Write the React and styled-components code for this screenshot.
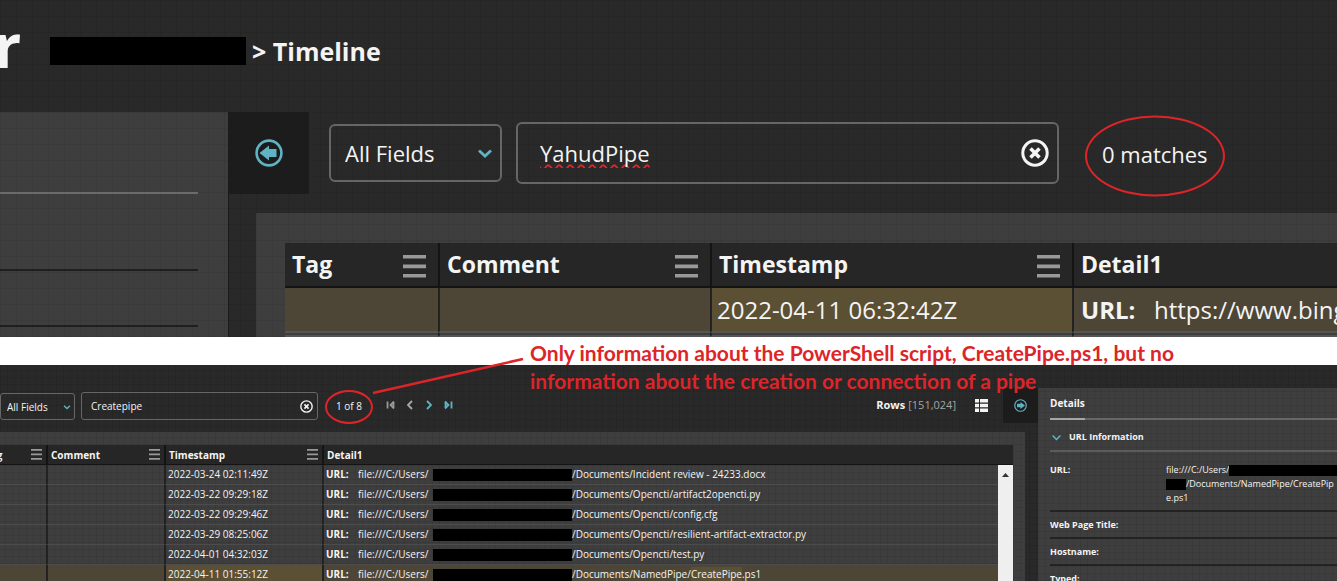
import React from "react";
import styled, { createGlobalStyle, css } from "styled-components";

const GlobalStyle = createGlobalStyle`
  *, *::before, *::after { box-sizing: border-box; }
  html, body { margin: 0; padding: 0; background: #ffffff; }
  body { font-family: "Open Sans", "Noto Sans", sans-serif; color: #f4f4f4; }
  button, input, select { font: inherit; color: inherit; }
`;

const accent = "#5fb3c3";
const red = "#dd2429";

const mesh = (pitch) => css`
  background-image:
    repeating-linear-gradient(90deg, rgba(0, 0, 0, 0.07) 0 1px, transparent 1px ${pitch}px),
    repeating-linear-gradient(0deg, rgba(0, 0, 0, 0.07) 0 1px, transparent 1px ${pitch}px);
`;

const Page = styled.main`
  display: flex;
  flex-direction: column;
  height: 100vh;
  overflow: hidden;
`;

const Capture = styled.section`
  position: relative;
  display: flex;
  flex-direction: column;
  background-color: #292929;
  ${(p) => mesh(p.$pitch)}
  ${(p) => p.$grow && "flex: 1; min-height: 0;"}
`;

const Gap = styled.div`
  position: relative;
  z-index: 2;
  flex: none;
  height: 28px;
`;

const Header = styled.header`
  display: flex;
  align-items: center;
  height: 112px;
  padding-bottom: 10px;
  overflow: hidden;
`;

const Brand = styled.span`
  margin-left: -6px;
  width: 56px;
  font-size: 60px;
  line-height: 64px;
  padding-bottom: 12px;
  font-weight: 700;
`;

const Redacted = styled.span`
  display: inline-block;
  flex: none;
  background: #000;
  width: ${(p) => p.$w}px;
  height: ${(p) => p.$h}px;
  vertical-align: middle;
`;

const Crumb = styled.h1`
  margin: 0 0 0 6px;
  font-size: 25px;
  line-height: 32px;
  font-weight: 700;
`;

const CutHeader = styled.header`
  height: 23px;
  overflow: hidden;
`;

const CutCrumb = styled.h2`
  margin: -12px 0 0 -25px;
  font-size: 11px;
  line-height: 16px;
  font-weight: 700;
`;

const Body = styled.div`
  display: flex;
  flex: 1;
  min-height: 0;
`;

const Sidebar = styled.aside`
  flex: none;
  width: 229px;
  padding-right: 30px;
  background-color: #3e3e3e;
  border-right: 1px solid #1a1a1a;
  ${mesh(16)}
`;

const Rule = styled.div`
  height: ${(p) => p.$h}px;
  border-bottom: 2px solid ${(p) => (p.$light ? "#6b6b6b" : "#1f1f1f")};
`;

const Content = styled.div`
  flex: 1;
  min-width: 0;
  display: flex;
  flex-direction: column;
`;

const Toolbar = styled.div`
  display: flex;
  align-items: flex-start;
  flex: none;
  height: ${(p) => (p.$small ? 44 : 101)}px;
  font-size: ${(p) => (p.$small ? 10 : 22)}px;
`;

const Collapse = styled.button`
  display: grid;
  place-items: center;
  flex: none;
  width: ${(p) => (p.$small ? 35 : 80)}px;
  height: ${(p) => (p.$small ? 35 : 82)}px;
  padding: 0;
  border: 0;
  background: #1c1c1c;
  color: ${accent};
`;

const Field = styled.div`
  display: flex;
  align-items: center;
  position: relative;
  flex: 0 1 ${(p) => p.$w}px;
  height: ${(p) => p.$h}px;
  margin: ${(p) => p.$m};
  border: ${(p) => (p.$small ? 1 : 2)}px solid #666;
  border-radius: ${(p) => (p.$small ? 3 : 6)}px;
`;

const Select = styled.select`
  appearance: none;
  width: 100%;
  height: 100%;
  padding: 0 0 0 ${(p) => (p.$small ? 6 : 14)}px;
  border: 0;
  outline: 0;
  background: transparent;
`;

const Chevron = styled.svg`
  position: absolute;
  right: ${(p) => p.$right}px;
  pointer-events: none;
  color: ${accent};
`;

const Input = styled.input`
  flex: 1;
  min-width: 0;
  height: 100%;
  padding: 0 0 0 ${(p) => (p.$small ? 9 : 22)}px;
  border: 0;
  outline: 0;
  background: transparent;
  ${(p) =>
    p.$misspelt &&
    `text-decoration: underline wavy ${red} 2px; text-decoration-skip-ink: none; text-underline-offset: 2px;`}
`;

const IconButton = styled.button`
  display: grid;
  place-items: center;
  flex: none;
  padding: 0;
  border: 0;
  background: transparent;
  color: ${(p) => p.$c || "#f4f4f4"};
  margin-right: ${(p) => p.$mr || 0}px;
`;

const Count = styled.span`
  position: relative;
  flex: none;
  white-space: nowrap;
  margin-left: ${(p) => (p.$small ? 18 : 43)}px;
  line-height: ${(p) => (p.$small ? 36 : 84)}px;
`;

const Ring = styled.span`
  position: absolute;
  left: 50%;
  top: 52%;
  width: ${(p) => p.$w}px;
  height: ${(p) => p.$h}px;
  transform: translate(-50%, -50%);
  border: 2px solid ${red};
  border-radius: 50%;
`;

const Pager = styled.nav`
  display: flex;
  align-items: center;
  gap: 7px;
  height: 34px;
  margin-left: 23px;
`;

const RowCount = styled.div`
  display: flex;
  gap: 3px;
  margin-left: auto;
  line-height: 34px;
  font-size: 11px;
  color: #a5a5a5;
  b { color: #f4f4f4; }
`;

const ViewButton = styled(IconButton)`
  height: 34px;
  margin: 0 15px 0 19px;
`;

const Panel = styled.div`
  flex: 1;
  background-color: #3e3e3e;
  ${(p) => mesh(p.$small ? 7 : 16)}
  margin: ${(p) => (p.$small ? "0 13px 0 -30px" : "0 0 0 27px")};
  padding: ${(p) => (p.$small ? "13px 12px 0 12px" : "30px 0 0 29px")};
`;

const Table = styled.table`
  width: 100%;
  table-layout: fixed;
  border-collapse: separate;
  border-spacing: 0;
  white-space: nowrap;
`;

const Col = styled.col`
  width: ${(p) => (p.$w ? `${p.$w}px` : "auto")};
`;

const Th = styled.th`
  height: ${(p) => (p.$small ? 20 : 45)}px;
  padding: 0 ${(p) => (p.$small ? "4px 0 3px" : "12px 0 7px")};
  background: #262626;
  border-bottom: ${(p) => (p.$small ? 1 : 2)}px solid #141414;
  font-size: ${(p) => (p.$small ? 10 : 23)}px;
  line-height: ${(p) => (p.$small ? 18 : 43)}px;
  font-weight: 700;
  text-align: left;
  & + & { border-left: 2px solid #141414; }
`;

const Heading = styled.div`
  display: flex;
  align-items: center;
  justify-content: space-between;
  svg { margin-top: ${(p) => (p.$small ? 0 : 3)}px; }
`;

const Td = styled.td`
  height: ${(p) => p.$h}px;
  padding: 0 0 0 ${(p) => (p.$small ? 2 : 5)}px;
  overflow: hidden;
  font-size: ${(p) => (p.$small ? 10 : 24)}px;
  line-height: ${(p) => (p.$small ? 19 : 42)}px;
  border-bottom: ${(p) => (p.$small ? 1 : 2)}px solid ${(p) => (p.$small ? "#4c4c4c" : "#555")};
  background: ${(p) => (p.$mark ? "#5b5033" : p.$hit ? "#4d4636" : "transparent")};
  & + & { border-left: 2px solid ${(p) => (p.$small ? "#222" : "#141414")}; }
`;

const UrlLine = styled.div`
  display: flex;
  align-items: center;
  padding-left: ${(p) => (p.$small ? 0 : 2)}px;
`;

const UrlLabel = styled.b`
  flex: none;
  width: ${(p) => (p.$small ? 32 : 73)}px;
`;

const UrlRoot = styled.span`
  flex: none;
  width: 75px;
`;

const Mark = styled.mark`
  color: inherit;
  background: #5b5033;
`;

const ScrollCell = styled.td`
  padding: 6px 0 0;
  vertical-align: top;
  background: #efefef;
  text-align: center;
  line-height: 0;
`;

const Details = styled.aside`
  flex: none;
  width: 299px;
  padding-left: 12px;
  overflow: hidden;
  background-color: #3e3e3e;
  ${mesh(7)}
  font-size: 9px;
  line-height: 14px;
`;

const Tabs = styled.div`
  display: flex;
  border-bottom: 2px solid #666;
`;

const Tab = styled.button`
  height: 32px;
  margin-bottom: -2px;
  padding: 0;
  border: 0;
  border-bottom: 2px solid #a5a5a5;
  background: transparent;
  font-size: 10px;
  font-weight: 700;
`;

const Group = styled.button`
  display: flex;
  align-items: center;
  gap: 8px;
  width: 100%;
  height: 32px;
  padding: 4px 0 0 2px;
  border: 0;
  border-bottom: 2px solid #5c5c5c;
  background: transparent;
  font-weight: 700;
`;

const Facts = styled.dl`
  margin: 0;
`;

const Fact = styled.div`
  display: flex;
  padding: ${(p) => (p.$tall ? "11px 0 5px" : "6px 0 5px")};
  border-bottom: 2px solid #232323;
  white-space: nowrap;
  dt { flex: none; width: 116px; font-weight: 700; }
  dd { margin: 0; }
`;

const Note = styled.p`
  position: absolute;
  left: 530px;
  top: 2px;
  margin: 0;
  white-space: nowrap;
  font: 700 21px/28px Lato, "Open Sans", sans-serif;
  color: ${red};
`;

const Leader = styled.svg`
  position: absolute;
  left: 371px;
  top: 18px;
`;

const CircleArrow = ({ size, flip }) => (
  <svg width={size} height={size} viewBox="0 0 28 28" transform={flip ? "scale(-1 1)" : undefined}>
    <circle cx="14" cy="14" r="12.4" fill="none" stroke="currentColor" strokeWidth="2.6" />
    <path d="M4.500 14 14 6.500V10H21.500v8H14v3.500Z" fill="currentColor" />
  </svg>
);

const ClearIcon = ({ size }) => (
  <svg width={size} height={size} viewBox="0 0 28 28" fill="none" stroke="currentColor">
    <circle cx="14" cy="14" r="12.2" strokeWidth="3" />
    <path d="m9.500 9.500 9 9m0-9-9 9" strokeWidth="3.600" />
  </svg>
);

const Down = ({ size, right }) => (
  <Chevron $right={right} width={size} height={size} viewBox="0 0 16 16" fill="none" stroke="currentColor" strokeWidth="2.800">
    <path d="m2 5.500 6 5.500 6-5.500" />
  </Chevron>
);

const Bars = ({ small }) => (
  <svg width={small ? 11 : 23} height={small ? 11 : 23} viewBox="0 0 23 23" fill="#999">
    <path d="M0 0h23v3.600H0zM0 9.600h23v3.600H0zM0 19h23v3.600H0z" />
  </svg>
);

const PageIcon = ({ d }) => (
  <svg width="12" height="12" viewBox="0 0 12 12" fill="none" stroke="currentColor" strokeWidth="1.800">
    <path d={d} />
  </svg>
);

const columns = ["Tag", "Comment", "Timestamp", "Detail1"];

const rows = [
  ["2022-03-24 02:11:49Z", "/Documents/Incident review - 24233.docx"],
  ["2022-03-22 09:29:18Z", "/Documents/Opencti/artifact2opencti.py"],
  ["2022-03-22 09:29:46Z", "/Documents/Opencti/config.cfg"],
  ["2022-03-29 08:25:06Z", "/Documents/Opencti/resilient-artifact-extractor.py"],
  ["2022-04-01 04:32:03Z", "/Documents/Opencti/test.py"],
  ["2022-04-11 01:55:12Z", "/Documents/NamedPipe/", "CreatePipe", ".ps1"],
];

const HeadRow = ({ small }) => (
  <thead>
    <tr>
      {columns.map((name, i) => (
        <Th key={name} $small={small} colSpan={small && i === 3 ? 2 : 1}>
          <Heading $small={small}>
            {name}
            {i < 3 && <Bars small={small} />}
          </Heading>
        </Th>
      ))}
    </tr>
  </thead>
);

const TopCapture = () => (
  <Capture $pitch={16}>
    <Header>
      <Brand>r</Brand>
      <Redacted $w={196} $h={28} />
      <Crumb>&gt; Timeline</Crumb>
    </Header>
    <Body>
      <Sidebar>
        <Rule $h={82} $light />
        <Rule $h={77} />
        <Rule $h={56} />
      </Sidebar>
      <Content>
        <Toolbar>
          <Collapse aria-label="Collapse left panel"><CircleArrow size={28} /></Collapse>
          <Field $w={173} $h={58} $m="12px 0 0 20px">
            <Select aria-label="Search field"><option>All Fields</option></Select>
            <Down size={16} right={7} />
          </Field>
          <Field $w={543} $h={62} $m="10px 0 0 14px">
            <Input aria-label="Search text" defaultValue="YahudPipe" spellCheck={false} $misspelt />
            <IconButton aria-label="Clear search" $mr={8}><ClearIcon size={28} /></IconButton>
          </Field>
          <Count>0 matches<Ring $w={140} $h={81} /></Count>
        </Toolbar>
        <Panel>
          <Table>
            <colgroup><Col $w={153} /><Col $w={272} /><Col $w={362} /><Col /></colgroup>
            <HeadRow />
            <tbody>
              <tr>
                <Td $h={45} $hit />
                <Td $h={45} $hit />
                <Td $h={45} $hit $mark>2022-04-11 06:32:42Z</Td>
                <Td $h={45} $hit>
                  <UrlLine><UrlLabel>URL:</UrlLabel>https://www.bing.com</UrlLine>
                </Td>
              </tr>
              <tr><Td $h={4} /><Td $h={4} /><Td $h={4} /><Td $h={4} /></tr>
            </tbody>
          </Table>
        </Panel>
      </Content>
    </Body>
  </Capture>
);

const BottomCapture = () => (
  <Capture $pitch={7} $grow>
    <CutHeader><CutCrumb>Timeline</CutCrumb></CutHeader>
    <Body>
      <Content>
        <Toolbar $small>
          <Field $small $w={75} $h={27} $m="5px 0 0 0">
            <Select $small aria-label="Search field"><option>All Fields</option></Select>
            <Down size={8} right={3} />
          </Field>
          <Field $small $w={237} $h={28} $m="4px 0 0 6px">
            <Input $small aria-label="Search text" defaultValue="Createpipe" />
            <IconButton aria-label="Clear search" $mr={4}><ClearIcon size={13} /></IconButton>
          </Field>
          <Count $small>1 of 8<Ring $w={48} $h={34} /></Count>
          <Pager aria-label="Matches">
            <IconButton aria-label="First" $c="#999"><PageIcon d="M2.500 2.500v7M9 2.500 5.500 6 9 9.500M8.500 3.500v5" /></IconButton>
            <IconButton aria-label="Previous" $c="#aaa"><PageIcon d="M8 2 4 6l4 4" /></IconButton>
            <IconButton aria-label="Next" $c={accent}><PageIcon d="m4 2 4 4-4 4" /></IconButton>
            <IconButton aria-label="Last" $c={accent}><PageIcon d="M9.500 2.500v7M3 2.500 6.500 6 3 9.500M3.500 3.500v5" /></IconButton>
          </Pager>
          <RowCount><b>Rows</b>[151,024]</RowCount>
          <ViewButton aria-label="List view">
            <svg width="13" height="13" viewBox="0 0 13 13" fill="#f4f4f4">
              <path d="M0 0h4v3.500H0zM5 0h8v3.500H5zM0 4.700h4v3.500H0zM5 4.700h8v3.500H5zM0 9.400h4V13H0zM5 9.400h8V13H5z" />
            </svg>
          </ViewButton>
          <Collapse $small aria-label="Collapse right panel"><CircleArrow size={13} flip /></Collapse>
        </Toolbar>
        <Panel $small>
          <Table>
            <colgroup><Col $w={64} /><Col $w={118} /><Col $w={158} /><Col /><Col $w={15} /></colgroup>
            <HeadRow small />
            <tbody>
              {rows.map(([time, path, match, tail], i) => (
                <tr key={time}>
                  <Td $small $h={20} $hit={!!match} />
                  <Td $small $h={20} $hit={!!match} />
                  <Td $small $h={20} $mark={!!match}>{time}</Td>
                  <Td $small $h={20} $hit={!!match}>
                    <UrlLine $small>
                      <UrlLabel $small>URL:</UrlLabel>
                      <UrlRoot>file:///C:/Users/</UrlRoot>
                      <Redacted $w={139} $h={12} />
                      <span>{path}{match && <Mark>{match}</Mark>}{tail}</span>
                    </UrlLine>
                  </Td>
                  {i === 0 && (
                    <ScrollCell rowSpan={rows.length}>
                      <svg width="7" height="4" viewBox="0 0 7 4" fill="#333"><path d="M0 4 3.500 0 7 4z" /></svg>
                    </ScrollCell>
                  )}
                </tr>
              ))}
            </tbody>
          </Table>
        </Panel>
      </Content>
      <Details>
        <Tabs><Tab>Details</Tab></Tabs>
        <Group>
          <svg width="9" height="9" viewBox="0 0 16 16" fill="none" stroke={accent} strokeWidth="2.800">
            <path d="m1 4.500 7 7 7-7" />
          </svg>
          URL Information
        </Group>
        <Facts>
          <Fact $tall>
            <dt>URL:</dt>
            <dd>
              file:///C:/Users/<Redacted $w={120} $h={11} /><br />
              <Redacted $w={20} $h={11} />/Documents/NamedPipe/CreatePip<br />
              e.ps1
            </dd>
          </Fact>
          <Fact><dt>Web Page Title:</dt></Fact>
          <Fact><dt>Hostname:</dt></Fact>
          <Fact><dt>Typed:</dt></Fact>
        </Facts>
      </Details>
    </Body>
  </Capture>
);

export default function App() {
  return (
    <Page>
      <GlobalStyle />
      <TopCapture />
      <Gap>
        <Leader width="154" height="42" viewBox="0 0 154 42">
          <path d="M2 38 152 4" stroke={red} strokeWidth="2.500" fill="none" />
        </Leader>
        <Note>
          Only information about the PowerShell script, CreatePipe.ps1, but no<br />
          information about the creation or connection of a pipe
        </Note>
      </Gap>
      <BottomCapture />
    </Page>
  );
}
